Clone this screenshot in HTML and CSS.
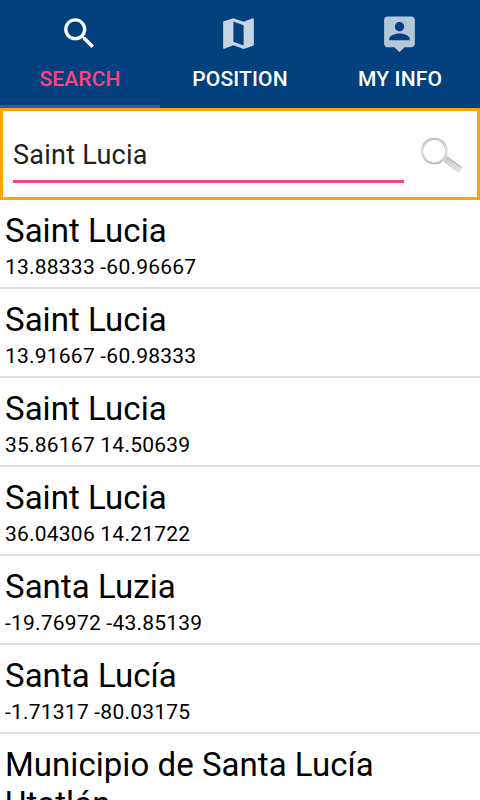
FILE: index.html
```html
<!DOCTYPE html>
<html lang="en">
<head>
    <meta charset="utf-8">
    <meta name="viewport" content="width=device-width, initial-scale=1.0">
    <title>Search</title>
    <link rel="stylesheet" href="styles.css">
</head>
<body>
    <nav class="tabs">
        <a class="tab active">
            <svg class="tab-icon" viewBox="0 0 24 24"><path d="M15.5 14h-.79l-.28-.27C15.41 12.59 16 11.11 16 9.5 16 5.91 13.09 3 9.5 3S3 5.91 3 9.5 5.91 16 9.5 16c1.61 0 3.09-.59 4.23-1.57l.27.28v.79l5 4.99L20.49 19l-4.99-5zm-6 0C7.01 14 5 11.99 5 9.5S7.01 5 9.5 5 14 7.01 14 9.5 11.99 14 9.5 14z"/></svg>
            <span>SEARCH</span>
        </a>
        <a class="tab">
            <svg class="tab-icon icon-map" viewBox="0 0 24 24"><path d="M20.5 3l-.16.03L15 5.1 9 3 3.36 4.9c-.21.07-.36.25-.36.48V20.5c0 .28.22.5.5.5l.16-.03L9 18.9l6 2.1 5.64-1.9c.21-.07.36-.25.36-.48V3.5c0-.28-.22-.5-.5-.5zM15 19l-6-2.11V5l6 2.11V19z"/></svg>
            <span>POSITION</span>
        </a>
        <a class="tab">
            <svg class="tab-icon icon-info" viewBox="0 0 24 24"><path d="M19 2H5c-1.11 0-2 .9-2 2v14c0 1.1.89 2 2 2h4l3 3 3-3h4c1.1 0 2-.9 2-2V4c0-1.1-.9-2-2-2zm-7 3.3c1.49 0 2.7 1.21 2.7 2.7 0 1.49-1.21 2.7-2.7 2.7-1.49 0-2.7-1.21-2.7-2.7 0-1.49 1.21-2.7 2.7-2.7zM18 16H6v-.9c0-2 4-3.1 6-3.1s6 1.1 6 3.1v.9z"/></svg>
            <span>MY INFO</span>
        </a>
    </nav>

    <form class="search-box">
        <input class="search-input" type="text" value="Saint Lucia" aria-label="Search">
        <button class="search-btn" type="button" aria-label="Search">
            <svg width="44" height="38" viewBox="0 0 44 38">
                <defs>
                    <linearGradient id="ring" x1="0" y1="0" x2="0" y2="1">
                        <stop offset="0" stop-color="#a2a2a2"/>
                        <stop offset=".5" stop-color="#d2d2d2"/>
                        <stop offset="1" stop-color="#b0b0b0"/>
                    </linearGradient>
                    <linearGradient id="handle" x1="0" y1="0" x2="1" y2="0.6">
                        <stop offset="0" stop-color="#c8c8c8"/>
                        <stop offset="1" stop-color="#e2e2e2"/>
                    </linearGradient>
                </defs>
                <circle cx="14.3" cy="14" r="12.1" fill="none" stroke="url(#ring)" stroke-width="2.4"/>
                <circle cx="14.3" cy="13.8" r="12" fill="none" stroke="#eeeeee" stroke-width=".8"/>
                <path d="M27 19.4L41.6 30.2Q42.6 31.2 39.8 34.8Q38.8 36 37.6 35.4L23.6 25Z" fill="url(#handle)"/>
                <path d="M26.8 19.8L41.6 30.6" fill="none" stroke="#b0b0b0" stroke-width="1.2"/>
            </svg>
        </button>
    </form>

    <ul class="results">
        <li class="result">
            <div class="name">Saint Lucia</div>
            <div class="coords">13.88333 -60.96667</div>
        </li>
        <li class="result">
            <div class="name">Saint Lucia</div>
            <div class="coords">13.91667 -60.98333</div>
        </li>
        <li class="result">
            <div class="name">Saint Lucia</div>
            <div class="coords">35.86167 14.50639</div>
        </li>
        <li class="result">
            <div class="name">Saint Lucia</div>
            <div class="coords">36.04306 14.21722</div>
        </li>
        <li class="result">
            <div class="name">Santa Luzia</div>
            <div class="coords">-19.76972 -43.85139</div>
        </li>
        <li class="result">
            <div class="name">Santa Lucía</div>
            <div class="coords">-1.71317 -80.03175</div>
        </li>
        <li class="result">
            <div class="name">Municipio de Santa Lucía Utatlán</div>
        </li>
    </ul>
</body>
</html>
```
FILE: styles.css
```css
body {
    margin: 0;
    height: 100vh;
    overflow: hidden;
    display: flex;
    flex-direction: column;
    background-color: #ffffff;
    color: #000000;
    font-family: Roboto, sans-serif;
}

/* Tabs */
.tabs {
    display: flex;
    flex: none;
    height: 108px;
    background-color: #03407e;
}

.tab {
    flex: 1;
    box-sizing: border-box;
    display: flex;
    flex-direction: column;
    align-items: center;
    padding-top: 13px;
    border-bottom: 3px solid transparent;
    color: #ffffff;
    font-size: 21px;
    font-weight: 500;
    line-height: 24px;
    letter-spacing: 0.15px;
}

.tab.active {
    border-bottom-color: #3f51b5;
    color: #ff4081;
}

.tab-icon {
    width: 41px;
    height: 41px;
    margin: 0 2px 13px 0;
    fill: #ffffff;
}

.icon-map {
    margin-right: 3px;
    fill: #c5d3e2;
}

.icon-info {
    margin-right: 1px;
    fill: #b3c6da;
}

/* Search box */
.search-box {
    box-sizing: border-box;
    flex: none;
    display: flex;
    height: 92px;
    padding: 15px 13px 14px 10px;
    border: 3px solid #ffa500;
}

.search-input {
    flex: 1;
    min-width: 0;
    box-sizing: border-box;
    height: 57px;
    margin: 0 16px 0 0;
    padding: 4px 0 0;
    border: none;
    border-bottom: 3px solid #ff4081;
    outline: none;
    background: none;
    color: #212121;
    font-family: inherit;
    font-size: 27px;
    letter-spacing: 0.25px;
}

.search-btn {
    margin: 0;
    padding: 11px 0 0;
    border: none;
    background: none;
    display: flex;
    align-items: flex-start;
}

/* Results */
.results {
    margin: 0;
    padding: 0;
    list-style: none;
}

.result {
    box-sizing: border-box;
    min-height: 89px;
    padding: 11px 5px 7px;
    border-bottom: 2px solid #dedede;
}

.name {
    font-size: 33px;
    line-height: 39px;
    letter-spacing: 0.04px;
}

.coords {
    margin-top: 5px;
    font-size: 21px;
    line-height: 25px;
    letter-spacing: 0.22px;
}
```
